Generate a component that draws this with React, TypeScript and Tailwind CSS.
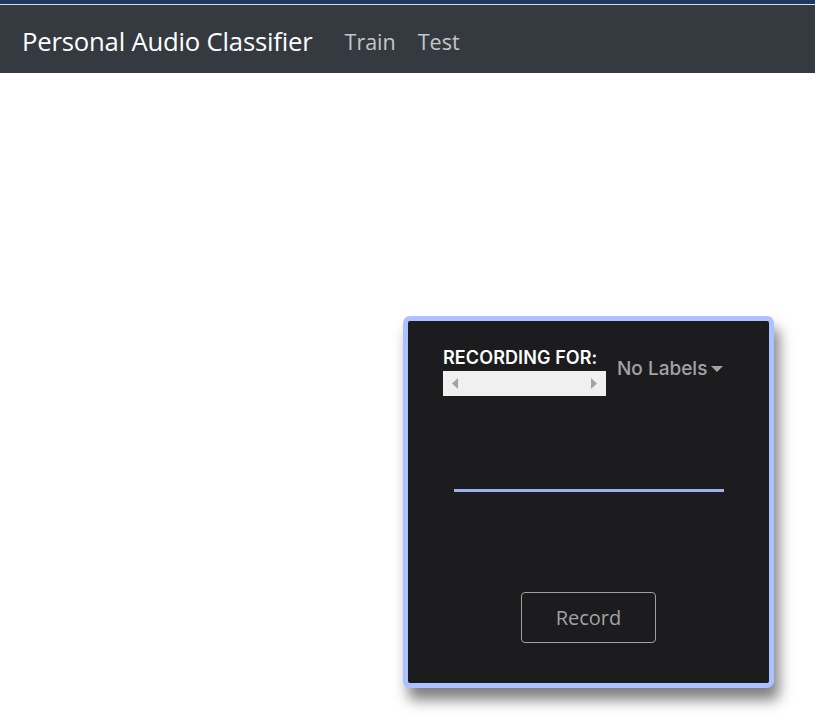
import React from "react";

export default function App() {
  return (
    <div className="min-h-[721px] w-[815px] bg-white">
      <div className="h-[4px] bg-[#1d3a5e]" />
      <div className="h-[1px] bg-[#dcdcdc]" />
      <nav className="flex h-[68px] items-center bg-[#343a40] pl-[22px] pt-[6px]" style={{ fontFamily: '"Open Sans", "Noto Sans", sans-serif' }}>
        <span className="text-[25.7px] text-white tracking-[-0.2px]">Personal Audio Classifier</span>
        <span className="ml-[32px] text-[21.5px] text-[#c4c6c8]">Train</span>
        <span className="ml-[22px] text-[21.5px] text-[#c4c6c8]">Test</span>
      </nav>
      <div className="ml-[403px] mt-[243px] w-[371px] h-[372px] rounded-[7px] border-[5px] border-[#adc1ff] bg-[#1c1c1e] shadow-[5px_12px_14px_rgba(0,0,0,0.5)]">
        <div className="flex flex-col h-full" style={{ fontFamily: 'Inter, "Noto Sans", sans-serif' }}>
          <div className="flex pl-[35px] pt-[25px]">
            <div className="flex flex-col">
              <span className="text-[18px] font-semibold text-white leading-[23px] tracking-[0.1px]">RECORDING FOR:</span>
              <div className="mt-[2px] flex h-[25px] w-[163px] items-center justify-between bg-[#f0f0f0] pl-[9px] pr-[9px]">
                <svg width="6" height="11" viewBox="0 0 6 11"><path d="M6 0 L0 5.5 L6 11 Z" fill="#a3a3a3" /></svg>
                <svg width="6" height="11" viewBox="0 0 6 11"><path d="M0 0 L6 5.5 L0 11 Z" fill="#a3a3a3" /></svg>
              </div>
            </div>
            <div className="ml-[11px] pb-[4px] flex items-center">
              <span className="text-[19px] font-medium text-[#a3a3a3] tracking-[0px]">No Labels</span>
              <svg className="ml-[4px]" width="12" height="6" viewBox="0 0 12 6"><path d="M0 0 L12 0 L6 6 Z" fill="#a3a3a3" /></svg>
            </div>
          </div>
          <div className="mt-[93px] mx-auto h-[3px] w-[270px] bg-[#9dafef]" />
          <div className="mt-[100px] mx-auto flex h-[51px] w-[135px] items-center justify-center rounded-[4px] border border-[#a0a0a0]">
            <span className="text-[20px] text-[#a3a3a3] pt-[1px]" style={{ fontFamily: '"Open Sans", "Noto Sans", sans-serif' }}>Record</span>
          </div>
        </div>
      </div>
    </div>
  );
}
